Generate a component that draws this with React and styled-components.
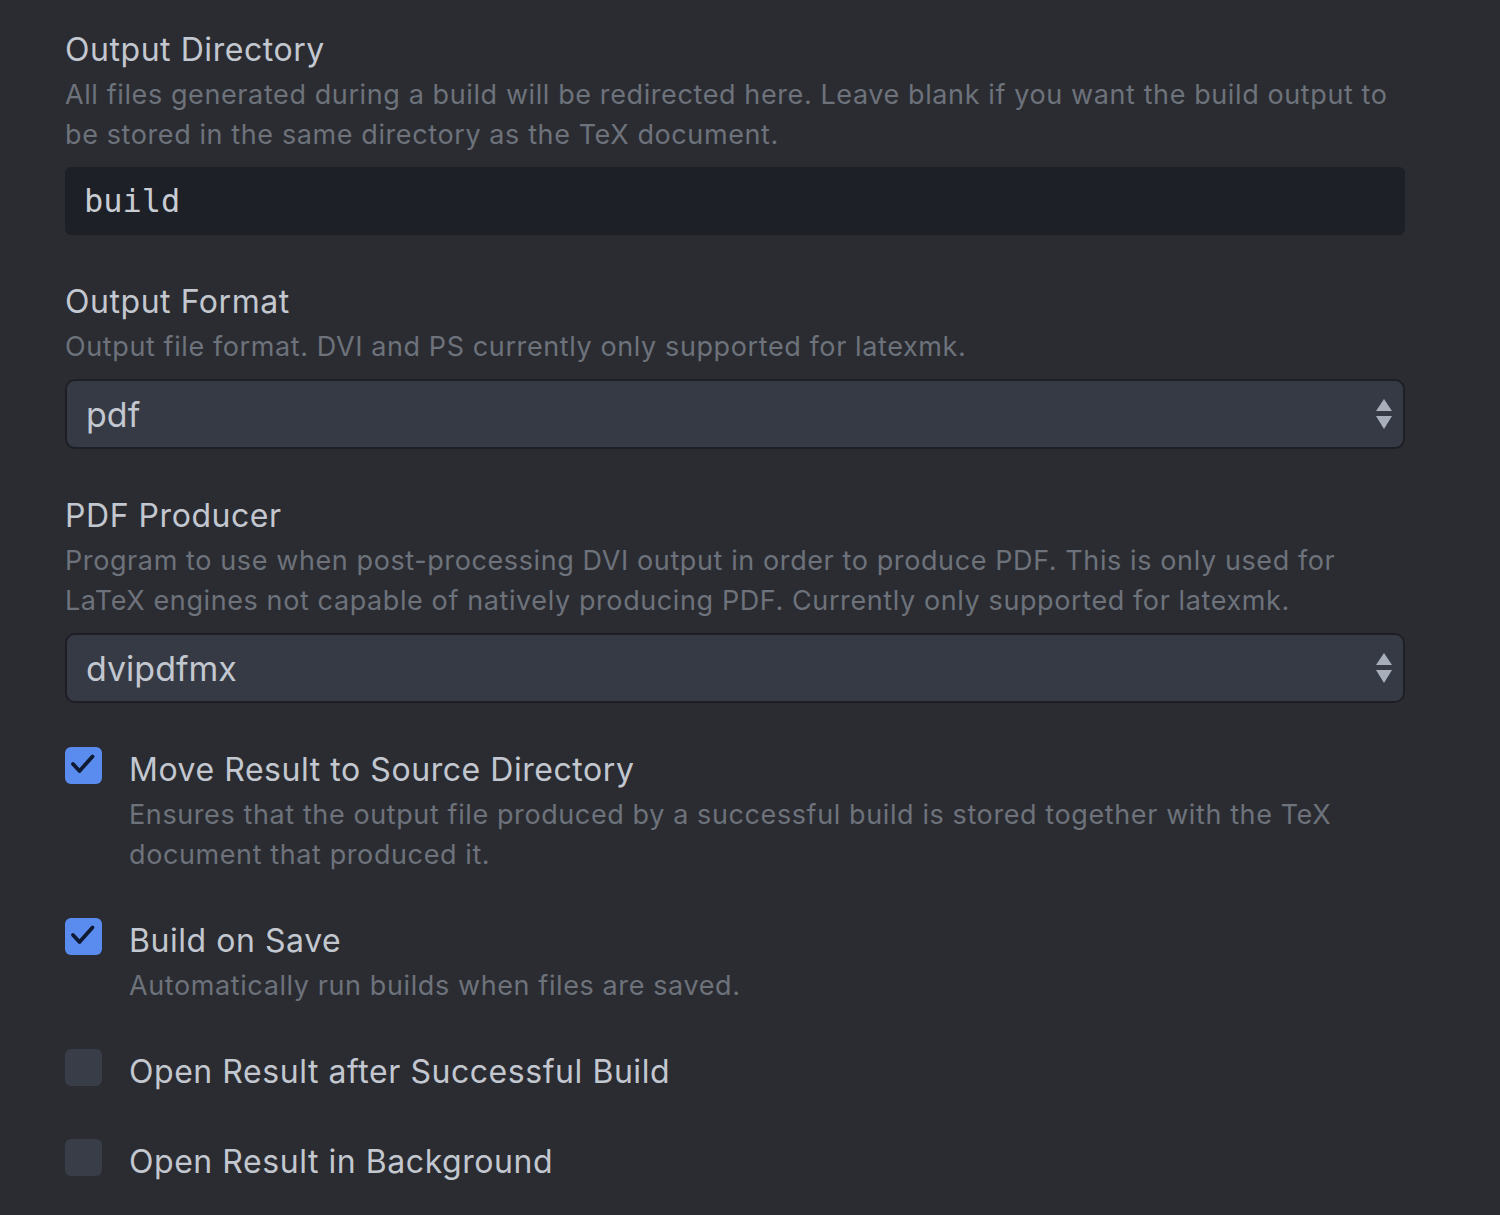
import React from 'react';
import styled, { createGlobalStyle } from 'styled-components';

const GlobalStyle = createGlobalStyle`
  html, body {
    margin: 0;
    padding: 0;
    background: #2a2c32;
  }
  body {
    font-family: Inter, "Noto Sans", sans-serif;
  }
`;

const Page = styled.div`
  width: 1405px;
  padding: 30px 0 0 65px;
  min-height: 1215px;
  box-sizing: border-box;
`;

const Field = styled.div`
  margin-bottom: ${(p) => p.gap || 47}px;
`;

const Title = styled.div`
  font-size: 32px;
  line-height: 40px;
  color: #c3c7cf;
  letter-spacing: 0.55px;
`;

const Desc = styled.div`
  margin-top: 5px;
  font-size: 27px;
  line-height: 40px;
  color: #6d727b;
  letter-spacing: 0.6px;
`;

const TextInput = styled.div`
  margin-top: 12px;
  height: 68px;
  border-radius: 6px;
  background: #1e2027;
  display: flex;
  align-items: center;
  padding: 0 19px;
  font-family: "DejaVu Sans Mono", "Liberation Mono", monospace;
  font-size: 32px;
  color: #c8ccd3;
`;

const SelectBox = styled.div`
  margin-top: 12px;
  height: 66px;
  border-radius: 10px;
  background: #353a45;
  border: 2px solid #1d1f24;
  display: flex;
  align-items: center;
  justify-content: space-between;
  padding: 0 10px 0 19px;
  font-size: 34px;
  color: #c3c7cf;
`;

const Arrows = styled.svg`
  width: 18px;
  height: 34px;
  margin-top: 2px;
`;

const CheckRow = styled.div`
  display: flex;
  align-items: flex-start;
  gap: 27px;
`;

const Box = styled.div`
  flex: none;
  width: 37px;
  height: 37px;
  margin-top: -3px;
  border-radius: 6px;
  background: ${(p) => (p.checked ? '#5a8cef' : '#393d48')};
`;

const CheckText = styled.div`
  display: flex;
  flex-direction: column;
`;

const fields = [
  {
    title: 'Output Directory',
    desc: 'All files generated during a build will be redirected here. Leave blank if you want the build output to be stored in the same directory as the TeX document.',
    input: 'build',
  },
  {
    title: 'Output Format',
    desc: 'Output file format. DVI and PS currently only supported for latexmk.',
    select: 'pdf',
  },
  {
    title: 'PDF Producer',
    desc: 'Program to use when post-processing DVI output in order to produce PDF. This is only used for LaTeX engines not capable of natively producing PDF. Currently only supported for latexmk.',
    select: 'dvipdfmx',
  },
];

const checks = [
  {
    title: 'Move Result to Source Directory',
    desc: 'Ensures that the output file produced by a successful build is stored together with the TeX document that produced it.',
    checked: true,
  },
  {
    title: 'Build on Save',
    desc: 'Automatically run builds when files are saved.',
    checked: true,
  },
  { title: 'Open Result after Successful Build', checked: false, gap: 50 },
  { title: 'Open Result in Background', checked: false },
];

const App = () => {
  return (
    <>
      <GlobalStyle />
      <Page>
        {fields.map((f) => (
          <Field key={f.title}>
            <Title>{f.title}</Title>
            <Desc>{f.desc}</Desc>
            {f.input && <TextInput>{f.input}</TextInput>}
            {f.select && (
              <SelectBox>
                <span>{f.select}</span>
                <Arrows viewBox="0 0 18 34">
                  <path d="M9 1 L17 13 L1 13 Z" fill="#a9aebb" />
                  <path d="M1 18 L17 18 L9 31 Z" fill="#a9aebb" />
                </Arrows>
              </SelectBox>
            )}
          </Field>
        ))}
        {checks.map((c) => (
          <Field key={c.title} gap={c.gap || 46}>
            <CheckRow>
              <Box checked={c.checked}>
                {c.checked && (
                  <svg width="37" height="37" viewBox="0 0 37 37">
                    <path
                      d="M8 17 L14.5 24 L27.5 9.5"
                      fill="none"
                      stroke="#101a33"
                      strokeWidth="3.8"
                      strokeLinecap="round"
                      strokeLinejoin="round"
                    />
                  </svg>
                )}
              </Box>
              <CheckText>
                <Title>{c.title}</Title>
                {c.desc && <Desc>{c.desc}</Desc>}
              </CheckText>
            </CheckRow>
          </Field>
        ))}
      </Page>
    </>
  );
};

export default App;
